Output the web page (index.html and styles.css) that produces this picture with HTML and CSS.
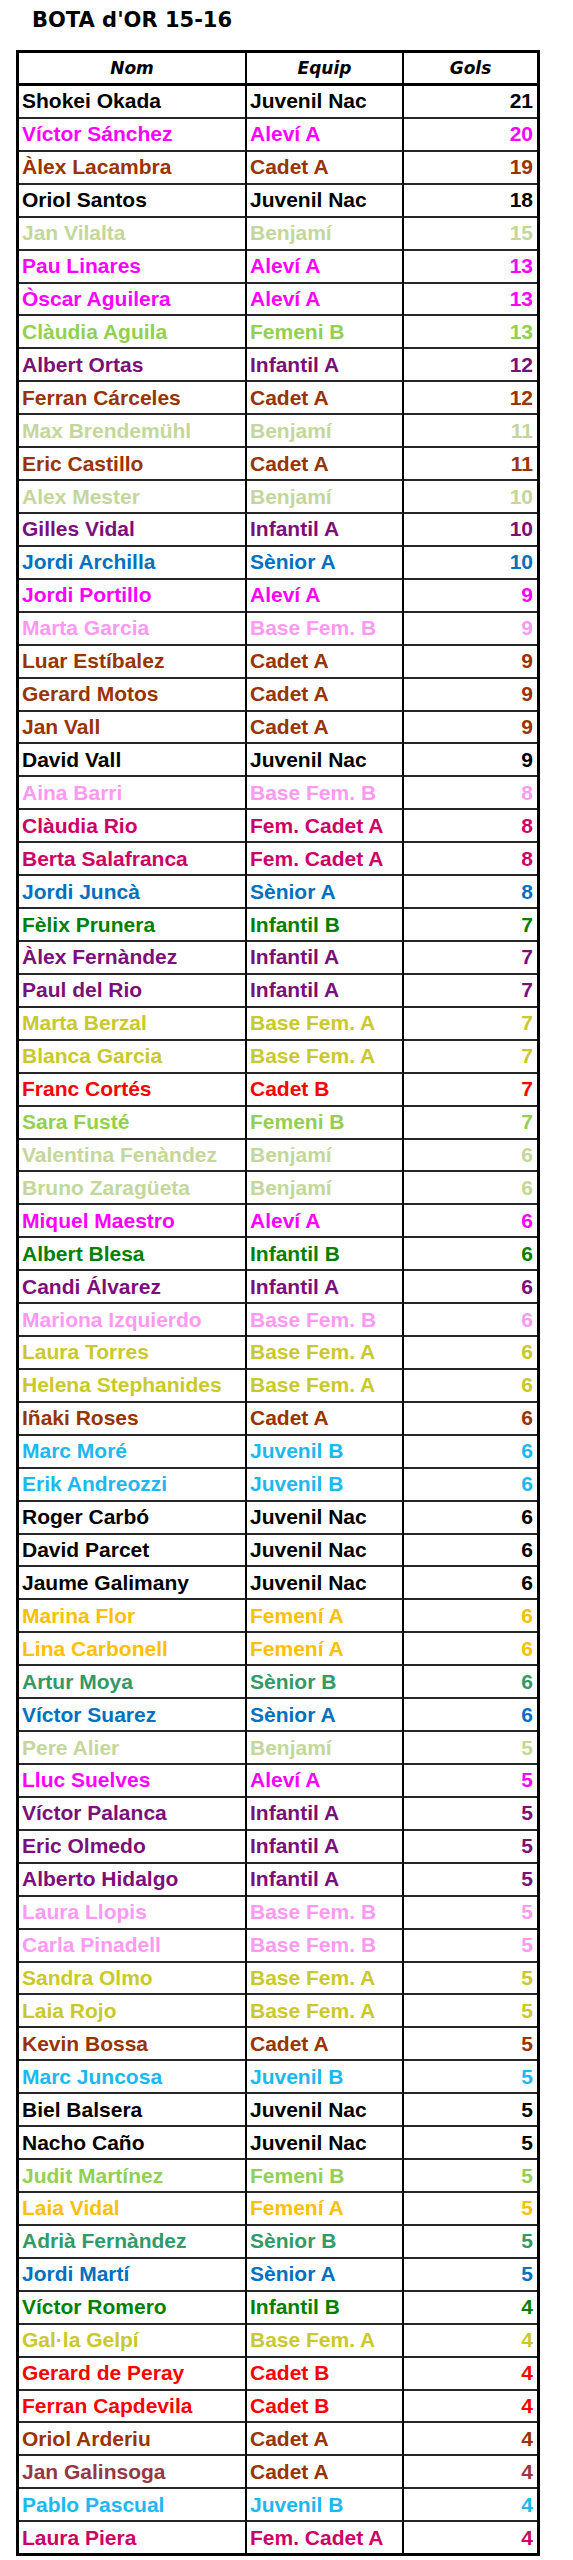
FILE: index.html
```html
<!DOCTYPE html>
<html lang="ca">
<head>
<meta charset="utf-8">
<title>BOTA d'OR 15-16</title>
<link rel="stylesheet" href="styles.css">
</head>
<body>
<div class="page">
  <h1 class="title">BOTA d'OR 15-16</h1>
  <table class="scorers">
    <thead>
      <tr><th class="c-nom">Nom</th><th class="c-equip">Equip</th><th class="c-gols">Gols</th></tr>
    </thead>
    <tbody>
      <tr class="jn"><td>Shokei Okada</td><td>Juvenil Nac</td><td class="g">21</td></tr>
      <tr class="aa"><td>Víctor Sánchez</td><td>Aleví A</td><td class="g">20</td></tr>
      <tr class="ca"><td>Àlex Lacambra</td><td>Cadet A</td><td class="g">19</td></tr>
      <tr class="jn"><td>Oriol Santos</td><td>Juvenil Nac</td><td class="g">18</td></tr>
      <tr class="bj"><td>Jan Vilalta</td><td>Benjamí</td><td class="g">15</td></tr>
      <tr class="aa"><td>Pau Linares</td><td>Aleví A</td><td class="g">13</td></tr>
      <tr class="aa"><td>Òscar Aguilera</td><td>Aleví A</td><td class="g">13</td></tr>
      <tr class="fb"><td>Clàudia Aguila</td><td>Femeni B</td><td class="g">13</td></tr>
      <tr class="ia"><td>Albert Ortas</td><td>Infantil A</td><td class="g">12</td></tr>
      <tr class="ca"><td>Ferran Cárceles</td><td>Cadet A</td><td class="g">12</td></tr>
      <tr class="bj"><td>Max Brendemühl</td><td>Benjamí</td><td class="g">11</td></tr>
      <tr class="ca"><td>Eric Castillo</td><td>Cadet A</td><td class="g">11</td></tr>
      <tr class="bj"><td>Alex Mester</td><td>Benjamí</td><td class="g">10</td></tr>
      <tr class="ia"><td>Gilles Vidal</td><td>Infantil A</td><td class="g">10</td></tr>
      <tr class="sa"><td>Jordi Archilla</td><td>Sènior A</td><td class="g">10</td></tr>
      <tr class="aa"><td>Jordi Portillo</td><td>Aleví A</td><td class="g">9</td></tr>
      <tr class="bfb"><td>Marta Garcia</td><td>Base Fem. B</td><td class="g">9</td></tr>
      <tr class="ca"><td>Luar Estíbalez</td><td>Cadet A</td><td class="g">9</td></tr>
      <tr class="ca"><td>Gerard Motos</td><td>Cadet A</td><td class="g">9</td></tr>
      <tr class="ca"><td>Jan Vall</td><td>Cadet A</td><td class="g">9</td></tr>
      <tr class="jn"><td>David Vall</td><td>Juvenil Nac</td><td class="g">9</td></tr>
      <tr class="bfb"><td>Aina Barri</td><td>Base Fem. B</td><td class="g">8</td></tr>
      <tr class="fca"><td>Clàudia Rio</td><td>Fem. Cadet A</td><td class="g">8</td></tr>
      <tr class="fca"><td>Berta Salafranca</td><td>Fem. Cadet A</td><td class="g">8</td></tr>
      <tr class="sa"><td>Jordi Juncà</td><td>Sènior A</td><td class="g">8</td></tr>
      <tr class="ib"><td>Fèlix Prunera</td><td>Infantil B</td><td class="g">7</td></tr>
      <tr class="ia"><td>Àlex Fernàndez</td><td>Infantil A</td><td class="g">7</td></tr>
      <tr class="ia"><td>Paul del Rio</td><td>Infantil A</td><td class="g">7</td></tr>
      <tr class="bfa"><td>Marta Berzal</td><td>Base Fem. A</td><td class="g">7</td></tr>
      <tr class="bfa"><td>Blanca Garcia</td><td>Base Fem. A</td><td class="g">7</td></tr>
      <tr class="cb"><td>Franc Cortés</td><td>Cadet B</td><td class="g">7</td></tr>
      <tr class="fb"><td>Sara Fusté</td><td>Femeni B</td><td class="g">7</td></tr>
      <tr class="bj"><td>Valentina Fenàndez</td><td>Benjamí</td><td class="g">6</td></tr>
      <tr class="bj"><td>Bruno Zaragüeta</td><td>Benjamí</td><td class="g">6</td></tr>
      <tr class="aa"><td>Miquel Maestro</td><td>Aleví A</td><td class="g">6</td></tr>
      <tr class="ib"><td>Albert Blesa</td><td>Infantil B</td><td class="g">6</td></tr>
      <tr class="ia"><td>Candi Álvarez</td><td>Infantil A</td><td class="g">6</td></tr>
      <tr class="bfb"><td>Mariona Izquierdo</td><td>Base Fem. B</td><td class="g">6</td></tr>
      <tr class="bfa"><td>Laura Torres</td><td>Base Fem. A</td><td class="g">6</td></tr>
      <tr class="bfa"><td>Helena Stephanides</td><td>Base Fem. A</td><td class="g">6</td></tr>
      <tr class="ca"><td>Iñaki Roses</td><td>Cadet A</td><td class="g">6</td></tr>
      <tr class="jb"><td>Marc Moré</td><td>Juvenil B</td><td class="g">6</td></tr>
      <tr class="jb"><td>Erik Andreozzi</td><td>Juvenil B</td><td class="g">6</td></tr>
      <tr class="jn"><td>Roger Carbó</td><td>Juvenil Nac</td><td class="g">6</td></tr>
      <tr class="jn"><td>David Parcet</td><td>Juvenil Nac</td><td class="g">6</td></tr>
      <tr class="jn"><td>Jaume Galimany</td><td>Juvenil Nac</td><td class="g">6</td></tr>
      <tr class="fa"><td>Marina Flor</td><td>Femení A</td><td class="g">6</td></tr>
      <tr class="fa"><td>Lina Carbonell</td><td>Femení A</td><td class="g">6</td></tr>
      <tr class="sb"><td>Artur Moya</td><td>Sènior B</td><td class="g">6</td></tr>
      <tr class="sa"><td>Víctor Suarez</td><td>Sènior A</td><td class="g">6</td></tr>
      <tr class="bj"><td>Pere Alier</td><td>Benjamí</td><td class="g">5</td></tr>
      <tr class="aa"><td>Lluc Suelves</td><td>Aleví A</td><td class="g">5</td></tr>
      <tr class="ia"><td>Víctor Palanca</td><td>Infantil A</td><td class="g">5</td></tr>
      <tr class="ia"><td>Eric Olmedo</td><td>Infantil A</td><td class="g">5</td></tr>
      <tr class="ia"><td>Alberto Hidalgo</td><td>Infantil A</td><td class="g">5</td></tr>
      <tr class="bfb"><td>Laura Llopis</td><td>Base Fem. B</td><td class="g">5</td></tr>
      <tr class="bfb"><td>Carla Pinadell</td><td>Base Fem. B</td><td class="g">5</td></tr>
      <tr class="bfa"><td>Sandra Olmo</td><td>Base Fem. A</td><td class="g">5</td></tr>
      <tr class="bfa"><td>Laia Rojo</td><td>Base Fem. A</td><td class="g">5</td></tr>
      <tr class="ca"><td>Kevin Bossa</td><td>Cadet A</td><td class="g">5</td></tr>
      <tr class="jb"><td>Marc Juncosa</td><td>Juvenil B</td><td class="g">5</td></tr>
      <tr class="jn"><td>Biel Balsera</td><td>Juvenil Nac</td><td class="g">5</td></tr>
      <tr class="jn"><td>Nacho Caño</td><td>Juvenil Nac</td><td class="g">5</td></tr>
      <tr class="fb"><td>Judit Martínez</td><td>Femeni B</td><td class="g">5</td></tr>
      <tr class="fa"><td>Laia Vidal</td><td>Femení A</td><td class="g">5</td></tr>
      <tr class="sb"><td>Adrià Fernàndez</td><td>Sènior B</td><td class="g">5</td></tr>
      <tr class="sa"><td>Jordi Martí</td><td>Sènior A</td><td class="g">5</td></tr>
      <tr class="ib"><td>Víctor Romero</td><td>Infantil B</td><td class="g">4</td></tr>
      <tr class="bfa"><td>Gal·la Gelpí</td><td>Base Fem. A</td><td class="g">4</td></tr>
      <tr class="cb"><td>Gerard de Peray</td><td>Cadet B</td><td class="g">4</td></tr>
      <tr class="cb"><td>Ferran Capdevila</td><td>Cadet B</td><td class="g">4</td></tr>
      <tr class="ca"><td>Oriol Arderiu</td><td>Cadet A</td><td class="g">4</td></tr>
      <tr class="ca"><td class="mauve">Jan Galinsoga</td><td>Cadet A</td><td class="g mauve">4</td></tr>
      <tr class="jb"><td>Pablo Pascual</td><td>Juvenil B</td><td class="g">4</td></tr>
      <tr class="fca"><td>Laura Piera</td><td>Fem. Cadet A</td><td class="g">4</td></tr>
    </tbody>
  </table>
</div>
</body>
</html>
```

FILE: styles.css
```css
html, body {
  margin: 0;
  padding: 0;
  background: #ffffff;
}

.page {
  padding: 0 0 0 16px;
}

.title {
  box-sizing: border-box;
  height: 50px;
  margin: 0;
  padding: 8px 0 0 16px;
  font-family: "DejaVu Sans", Verdana, sans-serif;
  font-weight: 700;
  font-size: 21px;
  line-height: 25px;
  color: #000;
}

.scorers {
  border: 3px solid #000;
  border-collapse: separate;
  border-spacing: 0;
  table-layout: fixed;
  width: 524px;
  font-family: "Liberation Sans", Arial, sans-serif;
  font-weight: 700;
  font-size: 21px;
}

.scorers th {
  box-sizing: border-box;
  height: 33px;
  padding: 0;
  border-bottom: 3px solid #000;
  border-right: 2px solid #000;
  font-family: "DejaVu Sans", Verdana, sans-serif;
  font-style: italic;
  font-weight: 700;
  font-size: 17px;
  text-align: center;
  vertical-align: middle;
  color: #000;
}

.scorers th.c-nom { width: 228px; }
.scorers th.c-equip { width: 157px; }
.scorers th.c-gols { width: 133px; border-right: 0; }

.scorers td {
  box-sizing: border-box;
  height: 32.93px;
  padding: 0 3px 0 3px;
  border-bottom: 2px solid #262626;
  border-right: 2px solid #000;
  white-space: nowrap;
  overflow: hidden;
  line-height: 24px;
  vertical-align: middle;
}

.scorers td.g {
  border-right: 0;
  text-align: right;
  padding-right: 4px;
}

.scorers tbody tr:last-child td {
  border-bottom: 0;
  height: 30.93px;
}

/* team colours */
.jn { color: #000000; }
.aa { color: #ff00ff; }
.ca { color: #993300; }
.bj { color: #c4d79b; }
.fb { color: #92d050; }
.ia { color: #7a0f7a; }
.sa { color: #0070c0; }
.bfb { color: #ff99f2; }
.fca { color: #cc0066; }
.ib { color: #008000; }
.bfa { color: #c9c92c; }
.cb { color: #ff0000; }
.jb { color: #1cb8ee; }
.fa { color: #ffc000; }
.sb { color: #339966; }
.scorers td.mauve { color: #953745; }
```
